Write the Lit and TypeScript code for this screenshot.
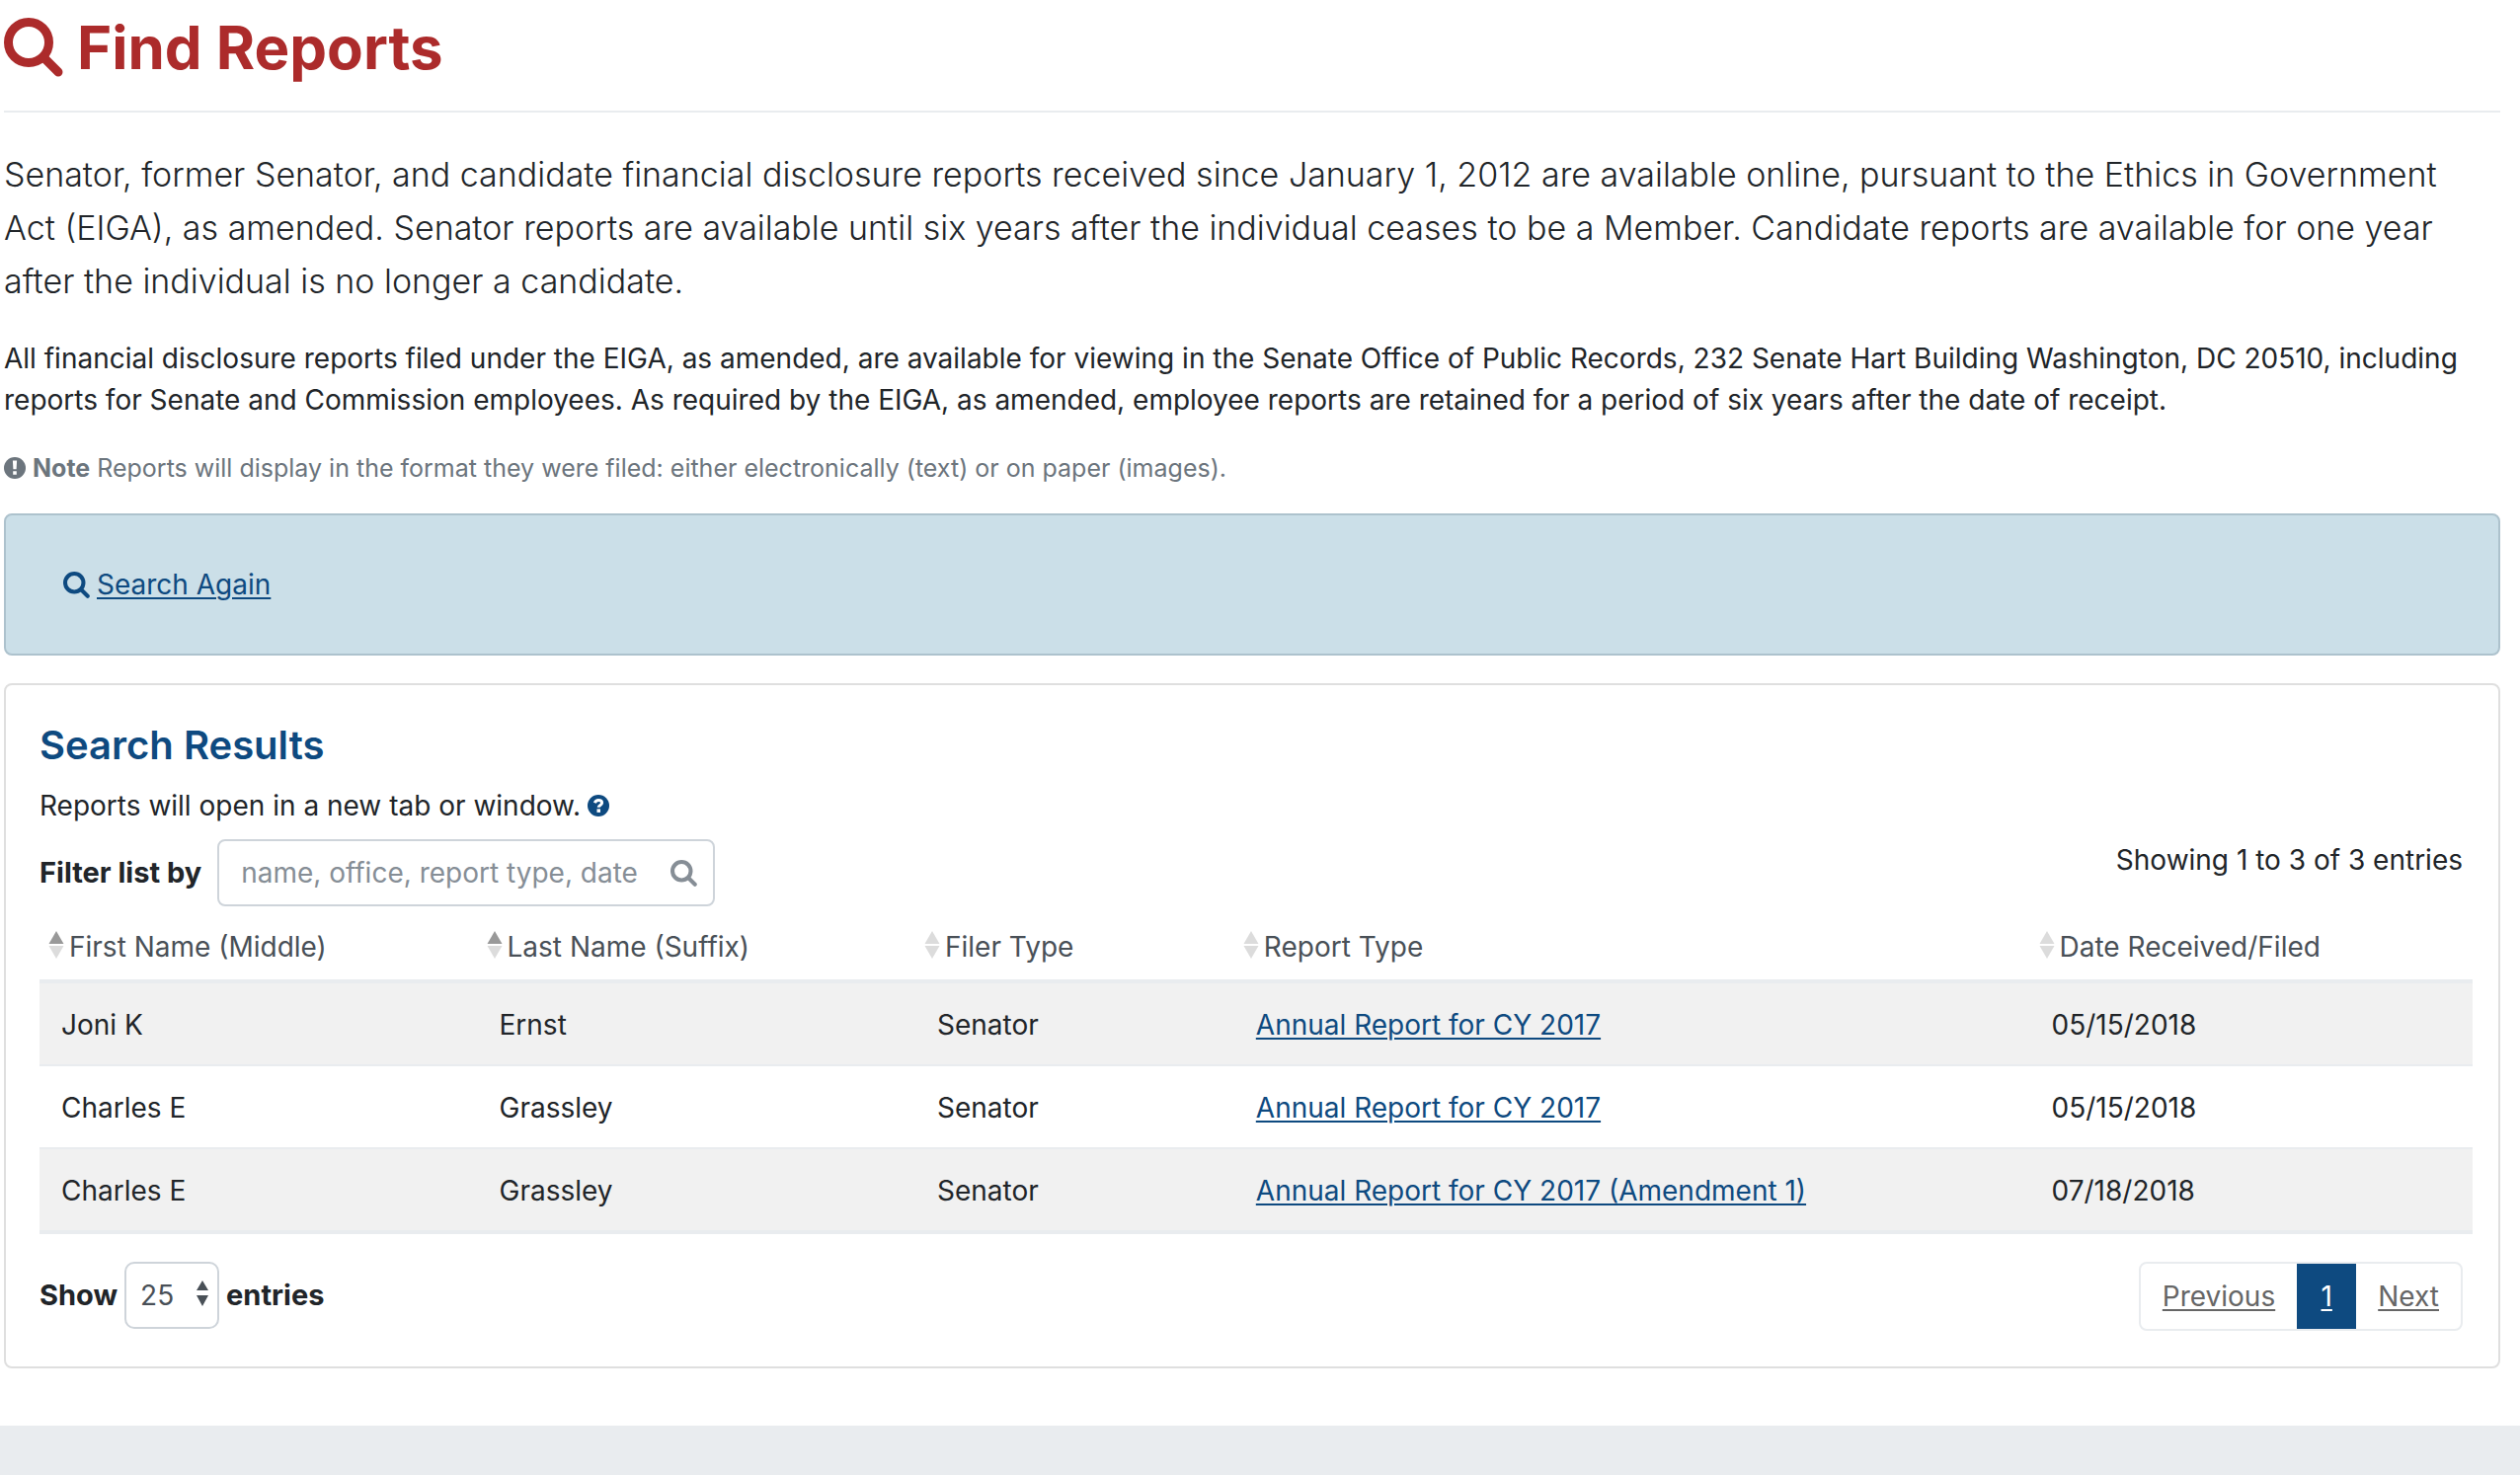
import { LitElement, html, css, svg } from "lit";
import { customElement } from "lit/decorators.js";

interface Filing {
  first: string;
  last: string;
  filer: string;
  report: string;
  date: string;
}

const FILINGS: Filing[] = [
  { first: "Joni K", last: "Ernst", filer: "Senator", report: "Annual Report for CY 2017", date: "05/15/2018" },
  { first: "Charles E", last: "Grassley", filer: "Senator", report: "Annual Report for CY 2017", date: "05/15/2018" },
  { first: "Charles E", last: "Grassley", filer: "Senator", report: "Annual Report for CY 2017 (Amendment 1)", date: "07/18/2018" },
];

const COLUMNS = [
  { label: "First Name (Middle)", cls: "c-first", sorted: true },
  { label: "Last Name (Suffix)", cls: "c-last", sorted: true },
  { label: "Filer Type", cls: "c-filer", sorted: false },
  { label: "Report Type", cls: "c-report", sorted: false },
  { label: "Date Received/Filed", cls: "c-date", sorted: false },
];

const searchIcon = (cls: string) => html`<svg class=${cls} viewBox="0 0 60 60" aria-hidden="true">
  ${svg`<circle cx="25" cy="25" r="20.5" fill="none" stroke="currentColor" stroke-width="9" />
  <path d="M41 41 L55 55" fill="none" stroke="currentColor" stroke-width="9" stroke-linecap="round" />`}
</svg>`;

@customElement("app-root")
export class AppRoot extends LitElement {
  static styles = css`
    :host {
      display: block;
      min-height: 100vh;
      background: #fff;
      color: #212529;
      font-family: Inter, "Liberation Sans", sans-serif;
      font-size: 28px;
      line-height: 42px;
    }
    * { box-sizing: border-box; }
    .page { display: flex; flex-direction: column; min-height: 100vh; }
    main { padding: 8px 20px 58px 4px; }
    a { color: #0e4a80; text-decoration: underline; text-decoration-thickness: 2px; text-underline-offset: 3px; }
    h1 {
      display: flex; align-items: center; gap: 14px;
      margin: 0; padding-bottom: 24px;
      border-bottom: 2px solid #e9ecef;
      color: #ac2b2b; font-size: 60px; line-height: 80px; font-weight: 700;
    }
    .i-title { width: 60px; height: 60px; }
    .lead { margin: 36px 0 30px; padding-right: 16px; font-size: 34px; line-height: 54px; font-weight: 300; }
    .body { margin: 0 0 28px; }
    .note { display: flex; align-items: center; gap: 7px; margin: 0 0 26px; color: #6c757d; font-size: 25px; line-height: 40px; }
    .i-dot { width: 22px; height: 22px; display: block; }
    .again {
      display: flex; align-items: center; gap: 7px;
      padding: 49px 58px; margin-bottom: 28px;
      border: 2px solid #adc2cd; border-radius: 8px; background: #cbdfe8; color: #0e4a80;
    }
    .i-small { width: 27px; height: 27px; }
    .card { border: 2px solid #dfdfdf; border-radius: 8px; padding: 36px 26px 36px 34px; }
    h2 { margin: 0; font-size: 40px; line-height: 50px; font-weight: 600; color: #0e4a80; }
    .hint { display: flex; align-items: center; gap: 7px; margin: 15px 0 13px; }
    .help { display: flex; padding: 0; border: 0; background: none; color: #0e4a80; }
    .tools { display: flex; justify-content: space-between; align-items: flex-start; padding-right: 10px; }
    .filter { display: flex; align-items: center; gap: 16px; }
    .filter, .length { font-size: 29px; }
    label { font-weight: 700; }
    .box { display: flex; align-items: center; width: 504px; height: 68px; border: 2px solid #ced4da; border-radius: 8px; padding: 0 16px 0 22px; color: #868e96; font-size: 28px; }
    input { flex: 1; min-width: 0; border: 0; outline: 0; padding: 0; background: none; font: inherit; color: #495057; }
    input::placeholder { color: #868e96; opacity: 1; }
    table { width: 100%; margin: 8px 0 28px; table-layout: fixed; border-collapse: separate; border-spacing: 0; border-bottom: 4px solid #e9ecef; }
    th { padding: 12px 8px; text-align: left; font-weight: 400; color: #495057; border-bottom: 4px solid #e9ecef; }
    .sort { display: flex; align-items: center; gap: 4px; padding: 0; border: 0; background: none; font: inherit; color: inherit; white-space: nowrap; }
    .i-sort { width: 18px; height: 30px; margin-bottom: 4px; }
    td { height: 84px; padding: 2px 22px 0; border-top: 2px solid #e9ecef; }
    tbody tr:first-child td { height: 82px; border-top: 0; }
    tbody tr:nth-child(odd) { background: #f1f1f1; }
    .c-first { width: 18%; }
    .c-last { width: 18%; }
    .c-filer { width: 13.1%; }
    .c-report { width: 32.7%; }
    .foot { display: flex; justify-content: space-between; align-items: flex-start; padding-right: 10px; }
    .length { display: flex; align-items: center; gap: 7px; font-weight: 700; }
    .pick { display: grid; align-items: center; }
    .pick > * { grid-area: 1 / 1; }
    select { appearance: none; width: 96px; height: 68px; padding: 0 14px; border: 2px solid #ced4da; border-radius: 10px; background: #fff; font: inherit; font-size: 28px; font-weight: 400; color: #495057; }
    .i-updown { width: 12px; height: 26px; justify-self: end; margin: 0 11px 4px 0; pointer-events: none; }
    .pager { display: flex; border: 2px solid #e9ecef; border-radius: 8px; }
    .pager a { padding: 12px 22px; color: #666; }
    .pager .current { min-width: 60px; text-align: center; background: #0e4a80; color: #fff; }
    footer { flex: 1; background: #e9ecef; min-height: 50px; }
  `;

  render() {
    return html`<div class="page">
      <main>
        <h1>${searchIcon("i-title")}<span>Find Reports</span></h1>
        <p class="lead">Senator, former Senator, and candidate financial disclosure reports received since January 1, 2012 are available online, pursuant to the Ethics in Government Act (EIGA), as amended. Senator reports are available until six years after the individual ceases to be a Member. Candidate reports are available for one year after the individual is no longer a candidate.</p>
        <p class="body">All financial disclosure reports filed under the EIGA, as amended, are available for viewing in the Senate Office of Public Records, 232 Senate Hart Building Washington, DC 20510, including reports for Senate and Commission employees. As required by the EIGA, as amended, employee reports are retained for a period of six years after the date of receipt.</p>
        <p class="note">
          <svg class="i-dot" viewBox="0 0 22 22" aria-hidden="true"><circle cx="11" cy="11" r="11" fill="currentColor" /><path d="M8.9 3.6h4.2l-.5 8.6h-3.2z M9.2 14.2h3.6v3.6h-3.6z" fill="#fff" /></svg>
          <span><b>Note</b> Reports will display in the format they were filed: either electronically (text) or on paper (images).</span>
        </p>
        <section class="again">${searchIcon("i-small")}<a href="#search">Search Again</a></section>
        <section class="card">
          <h2>Search Results</h2>
          <div class="hint"><span>Reports will open in a new tab or window.</span>
            <button class="help" type="button" aria-label="Help"><svg class="i-dot" viewBox="0 0 22 22" aria-hidden="true"><circle cx="11" cy="11" r="11" fill="currentColor" /><path d="M7.4 8.2C8.1 6.2 9.3 5.5 11 5.5c2.1 0 3.6 1 3.6 2.7 0 2.3-3.4 2.1-3.4 4.6" fill="none" stroke="#fff" stroke-width="3" /><path d="M9.5 14.4h3.5v3.5h-3.5z" fill="#fff" /></svg></button>
          </div>
          <div class="tools">
            <div class="filter"><label for="filter">Filter list by</label>
              <div class="box"><input id="filter" type="text" placeholder="name, office, report type, date" />${searchIcon("i-small")}</div>
            </div>
            <div class="info">Showing 1 to 3 of 3 entries</div>
          </div>
          <table>
            <thead><tr>${COLUMNS.map((c) => html`<th class=${c.cls} scope="col"><button class="sort" type="button">
              <svg class="i-sort" viewBox="0 0 18 30" aria-hidden="true"><path d="M9 1 L16.5 14 H1.5z" fill=${c.sorted ? "#999" : "#dcdcdc"} /><path d="M1.5 16 H16.5 L9 29z" fill="#dcdcdc" /></svg><span>${c.label}</span></button></th>`)}</tr></thead>
            <tbody>${FILINGS.map((f) => html`<tr><td>${f.first}</td><td>${f.last}</td><td>${f.filer}</td><td><a href="#report">${f.report}</a></td><td>${f.date}</td></tr>`)}</tbody>
          </table>
          <div class="foot">
            <div class="length"><label for="len">Show</label>
              <div class="pick"><select id="len"><option>25</option></select><svg class="i-updown" viewBox="0 0 12 26" aria-hidden="true"><path d="M6 0 L12 10 H0z M0 15 H12 L6 26z" fill="#495057" /></svg></div>
              <span>entries</span></div>
            <nav class="pager"><a href="#prev">Previous</a><a class="current" href="#1">1</a><a href="#next">Next</a></nav>
          </div>
        </section>
      </main>
      <footer></footer>
    </div>`;
  }
}
